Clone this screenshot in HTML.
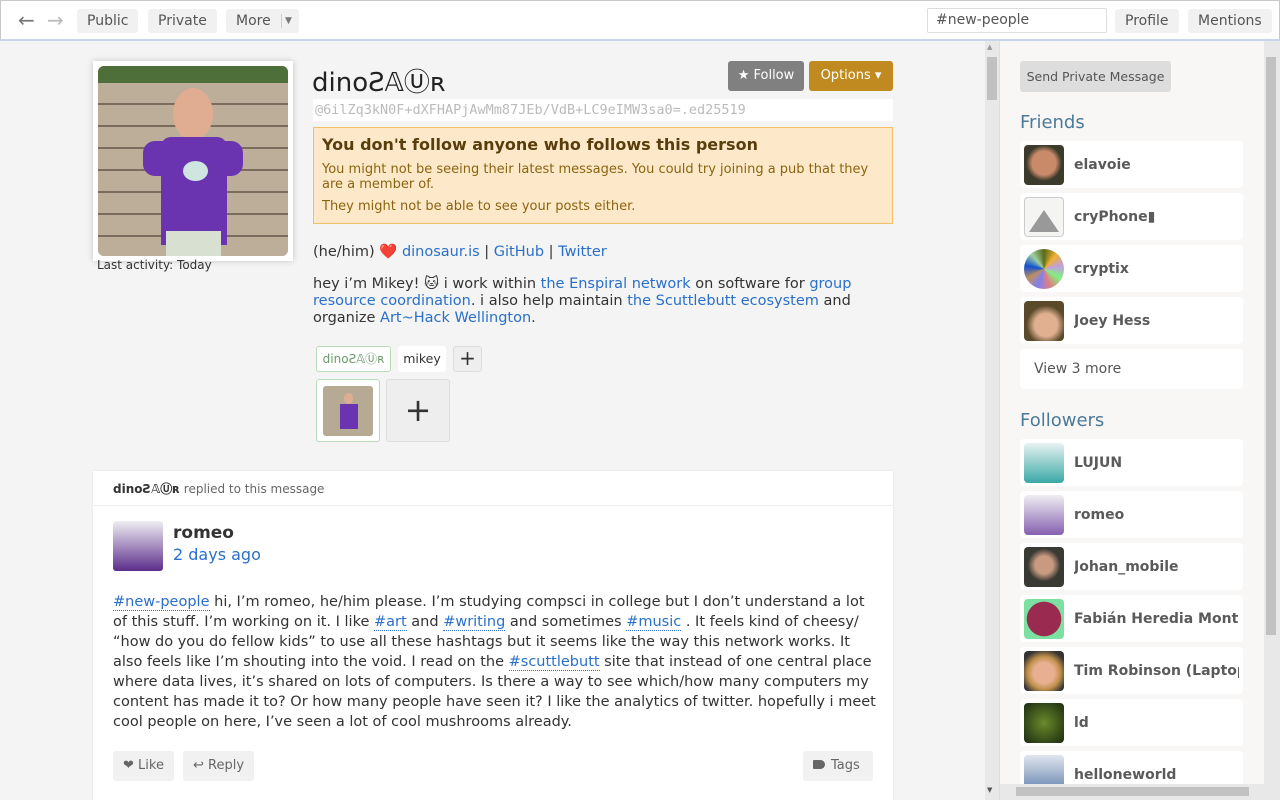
<!DOCTYPE html>
<html><head><meta charset="utf-8"><style>
*{box-sizing:border-box;margin:0;padding:0}
body{width:1280px;height:800px;overflow:hidden;font-family:"DejaVu Sans","Liberation Sans",sans-serif;font-size:14px;color:#333;background:#f4f4f4;position:relative}
a{color:#2a6fc9;text-decoration:none}
.top{position:absolute;left:0;top:0;width:1280px;height:41px;background:#fff;border:1px solid #c8c8c8;border-bottom:2px solid #c9d6ea}
.tb{position:absolute;top:8px;height:24px;background:#f1f1f1;border-radius:3px;color:#555;font-size:14px;line-height:24px;padding:0 10px}
.main{position:absolute;left:0;top:41px;width:999px;height:759px;background:#f4f4f4;overflow:hidden}
.side{position:absolute;left:999px;top:41px;width:281px;height:759px;background:#f8f7f6;border-left:1px solid #ddd;overflow:hidden}
.abs{position:absolute}
.btn{position:absolute;border-radius:3px;color:#fff;font-size:13px;text-align:center;line-height:30px}
.item{position:absolute;left:20px;width:223px;height:47px;background:#fff;border-radius:4px}
.item .av{position:absolute;left:4px;top:4px;width:40px;height:40px;border-radius:4px}
.item b{position:absolute;left:54px;top:16px;font-size:14px;color:#5a5a5a;white-space:nowrap;overflow:hidden;width:165px}
h3{position:absolute;left:20px;font-weight:normal;font-size:18px;color:#4b7a98}
.sb{position:absolute;background:#e8e8e8}
.thumb{position:absolute;background:#c1c1c1}
.tag{color:#2a6fc9;border-bottom:1px dotted #2a6fc9}
.act{position:absolute;top:710px;height:30px;background:#f1f1f1;border-radius:3px;color:#666;font-size:13px;line-height:30px;padding:0 10px}
</style></head><body>
<div class="top">
<div class="abs" style="left:17px;top:7px;font-size:20px;color:#777">&#8592;</div>
<div class="abs" style="left:46px;top:7px;font-size:20px;color:#bbb">&#8594;</div>
<div class="tb" style="left:76px">Public</div>
<div class="tb" style="left:147px">Private</div>
<div class="tb" style="left:225px;padding-right:28px">More<span style="position:absolute;left:55px;top:5px;height:14px;border-left:1px solid #ccc"></span><span style="position:absolute;left:59px;top:0;font-size:9px;color:#777">&#9660;</span></div>
<div class="abs" style="left:926px;top:7px;width:180px;height:25px;border:1px solid #ddd;border-radius:2px;padding-left:8px;line-height:23px;color:#555;font-size:14px">#new-people</div>
<div class="tb" style="left:1114px">Profile</div>
<div class="tb" style="left:1187px">Mentions</div>
</div>

<div class="main">
<div class="abs" style="left:93px;top:20px;width:200px;height:200px;background:#fff;box-shadow:0 0 6px rgba(0,0,0,.2)">
 <div class="abs" style="left:5px;top:5px;width:190px;height:190px;border-radius:6px;overflow:hidden;background:#b7aa95">
  <div class="abs" style="left:0;top:0;width:190px;height:17px;background:#4e6f3a"></div>
  <div class="abs" style="left:0;top:17px;width:190px;height:173px;background:repeating-linear-gradient(180deg,#bcae98 0 20px,#7a6d5e 20px 22px)"></div>
  <div class="abs" style="left:75px;top:22px;width:40px;height:52px;border-radius:50%;background:#e0ad92"></div>
  <div class="abs" style="left:63px;top:71px;width:66px;height:108px;background:#6a33b0;border-radius:10px 10px 0 0"></div>
  <div class="abs" style="left:45px;top:75px;width:100px;height:35px;background:#6a33b0;border-radius:12px"></div>
  <div class="abs" style="left:68px;top:165px;width:55px;height:25px;background:#d8e0d2"></div>
  <div class="abs" style="left:85px;top:95px;width:25px;height:20px;background:#cfe5e0;border-radius:50%"></div>
 </div>
</div>
<div class="abs" style="left:97px;top:217px;font-size:12px;color:#333">Last activity: Today</div>

<div class="abs" style="left:312px;top:21px;font-size:26px;color:#222">dinoƧ𝔸Ⓤʀ</div>
<div class="btn" style="left:728px;top:20px;width:76px;background:#808080">&#9733; Follow</div>
<div class="btn" style="left:809px;top:20px;width:84px;background:#c08a20">Options &#9662;</div>
<div class="abs" style="left:313px;top:58px;width:580px;height:22px;background:#fff;font-family:'DejaVu Sans Mono','Liberation Mono',monospace;font-size:13.5px;color:#bbb;line-height:22px;padding-left:2px">@6ilZq3kN0F+dXFHAPjAwMm87JEb/VdB+LC9eIMW3sa0=.ed25519</div>
<div class="abs" style="left:313px;top:86px;width:580px;height:97px;background:#fde9c9;border:1px solid #f4c067;padding:7px 8px">
 <div style="font-weight:bold;font-size:16px;color:#5a3d0c">You don't follow anyone who follows this person</div>
 <div style="font-size:13px;color:#8a6410;line-height:15px;margin-top:8px">You might not be seeing their latest messages. You could try joining a pub that they are a member of.</div>
 <div style="font-size:13px;color:#8a6410;margin-top:7px">They might not be able to see your posts either.</div>
</div>
<div class="abs" style="left:313px;top:202px;font-size:14.5px;color:#333">(he/him) <span style="color:#d0141e">&#10084;&#65039;</span> <a>dinosaur.is</a> | <a>GitHub</a> | <a>Twitter</a></div>
<div class="abs" style="left:313px;top:235px;width:560px;font-size:14.5px;line-height:17px;color:#333">hey i’m Mikey! 🐱 i work within <a>the Enspiral network</a> on software for <a>group resource coordination</a>. i also help maintain <a>the Scuttlebutt ecosystem</a> and organize <a>Art~Hack Wellington</a>.</div>
<div class="abs" style="left:316px;top:305px;width:75px;height:26px;border:1px solid #b8dcb8;background:#fff;border-radius:3px;font-size:12px;color:#6a9a6a;line-height:24px;text-align:center">dinoƧ𝔸Ⓤʀ</div>
<div class="abs" style="left:398px;top:305px;width:48px;height:26px;background:#fff;border-radius:3px;font-size:12.5px;line-height:26px;text-align:center">mikey</div>
<div class="abs" style="left:453px;top:305px;width:29px;height:26px;background:#eee;border:1px solid #ddd;border-radius:3px;font-size:20px;line-height:23px;text-align:center">+</div>
<div class="abs" style="left:316px;top:338px;width:64px;height:63px;border:1px solid #b8dcb8;background:#fff;border-radius:3px">
 <div class="abs" style="left:6px;top:6px;width:50px;height:50px;border-radius:3px;background:#b7aa95;overflow:hidden"><div class="abs" style="left:17px;top:18px;width:18px;height:25px;background:#6a33b0"></div><div class="abs" style="left:21px;top:7px;width:9px;height:11px;background:#e0ad92;border-radius:50%"></div></div>
</div>
<div class="abs" style="left:386px;top:338px;width:64px;height:63px;background:#eee;border:1px solid #ddd;border-radius:3px;font-size:32px;line-height:60px;text-align:center;color:#333">+</div>

<div class="abs" style="left:93px;top:430px;width:800px;height:340px;background:#fff;box-shadow:0 0 3px rgba(0,0,0,.08)">
 <div class="abs" style="left:0;top:0;width:800px;height:35px;border-bottom:1px solid #eee;padding:9px 20px;font-size:12px;color:#666"><b style="color:#333">dinoƧ𝔸Ⓤʀ</b> replied to this message</div>
 <div class="abs" style="left:20px;top:50px;width:50px;height:50px;border-radius:3px;background:linear-gradient(#efeef3,#5b2d8a)"></div>
 <div class="abs" style="left:80px;top:52px;font-size:17px;font-weight:bold;color:#333">romeo</div>
 <div class="abs" style="left:80px;top:74px;font-size:16px;color:#2a6fc9">2 days ago</div>
 <div class="abs" style="left:20px;top:121px;width:768px;font-size:14.5px;line-height:20px;color:#333"><span class="tag">#new-people</span> hi, I’m romeo, he/him please. I’m studying compsci in college but I don’t understand a lot of this stuff. I’m working on it. I like <span class="tag">#art</span> and <span class="tag">#writing</span> and sometimes <span class="tag">#music</span> . It feels kind of cheesy/ “how do you do fellow kids” to use all these hashtags but it seems like the way this network works. It also feels like I’m shouting into the void. I read on the <span class="tag">#scuttlebutt</span> site that instead of one central place where data lives, it’s shared on lots of computers. Is there a way to see which/how many computers my content has made it to? Or how many people have seen it? I like the analytics of twitter. hopefully i meet cool people on here, I’ve seen a lot of cool mushrooms already.</div>
</div>
<div class="act" style="left:113px;top:710px">&#10084; Like</div>
<div class="act" style="left:183px;top:710px">&#8617; Reply</div>
<div class="act" style="left:803px;top:710px;width:70px;padding-left:10px"><span style="display:inline-block;width:12px;height:9px;background:#666;border-radius:1px 5px 5px 1px;margin-right:6px"></span>Tags</div>

<div class="sb" style="left:985px;top:0;width:14px;height:759px"></div>
<div class="thumb" style="left:987px;top:16px;width:10px;height:43px"></div>
<div class="abs" style="left:987px;top:2px;font-size:7px;color:#999">&#9650;</div>
<div class="abs" style="left:987px;top:745px;font-size:7px;color:#555">&#9660;</div>
</div>

<div class="side">
<div class="abs" style="left:20px;top:20px;width:151px;height:31px;background:#ddd;border-radius:3px;font-size:12.5px;color:#555;line-height:31px;text-align:center">Send Private Message</div>
<h3 style="top:71px">Friends</h3>
<div class="item" style="top:100px"><div class="av" style="background:radial-gradient(circle at 50% 45%,#c98a6a 0 40%,#3c3a2a 60%)"></div><b>elavoie</b></div>
<div class="item" style="top:152px"><div class="av" style="background:#f4f4f2;border:1px solid #ccc"><div style="margin:12px auto;width:0;height:0;border-left:15px solid transparent;border-right:15px solid transparent;border-bottom:22px solid #999"></div></div><b>cryPhone&#9646;</b></div>
<div class="item" style="top:204px"><div class="av" style="background:conic-gradient(#5a6a1a,#f0b030,#c0a0e0,#80f080,#e08080,#8080f0,#c09060,#1050d0,#a0d0a0,#5a6a1a);border-radius:50%"></div><b>cryptix</b></div>
<div class="item" style="top:256px"><div class="av" style="background:radial-gradient(circle at 55% 60%,#e0b090 0 35%,#5a4a2a 60%)"></div><b>Joey Hess</b></div>
<div class="item" style="top:308px;height:40px"><span class="abs" style="left:14px;top:12px;font-size:14px;color:#555">View 3 more</span></div>
<h3 style="top:369px">Followers</h3>
<div class="item" style="top:398px"><div class="av" style="background:linear-gradient(#e8f3f2,#3aa8a5)"></div><b>LUJUN</b></div>
<div class="item" style="top:450px"><div class="av" style="background:linear-gradient(#efeef3,#8560b0)"></div><b>romeo</b></div>
<div class="item" style="top:502px"><div class="av" style="background:radial-gradient(circle at 50% 45%,#c89a80 0 30%,#3a3a34 55%)"></div><b>Johan_mobile</b></div>
<div class="item" style="top:554px"><div class="av" style="background:radial-gradient(circle,#9a2a50 0 60%,#7be0a0 62%)"></div><b>Fabián Heredia Montiel</b></div>
<div class="item" style="top:606px"><div class="av" style="background:radial-gradient(circle at 50% 55%,#e8b090 0 35%,#c0904a 55%,#333 80%)"></div><b>Tim Robinson (Laptop)</b></div>
<div class="item" style="top:658px"><div class="av" style="background:radial-gradient(circle,#6a8a2a,#1a2a10)"></div><b>ld</b></div>
<div class="item" style="top:710px"><div class="av" style="background:linear-gradient(#e0e6ef,#5a7aa8)"></div><b>helloneworld</b></div>
<div class="sb" style="left:264px;top:0;width:17px;height:745px"></div>
<div class="thumb" style="left:266px;top:16px;width:10px;height:578px"></div>
<div class="sb" style="left:0;top:743px;width:281px;height:16px"></div>
<div class="thumb" style="left:16px;top:746px;width:233px;height:9px"></div>
</div>
</body></html>
